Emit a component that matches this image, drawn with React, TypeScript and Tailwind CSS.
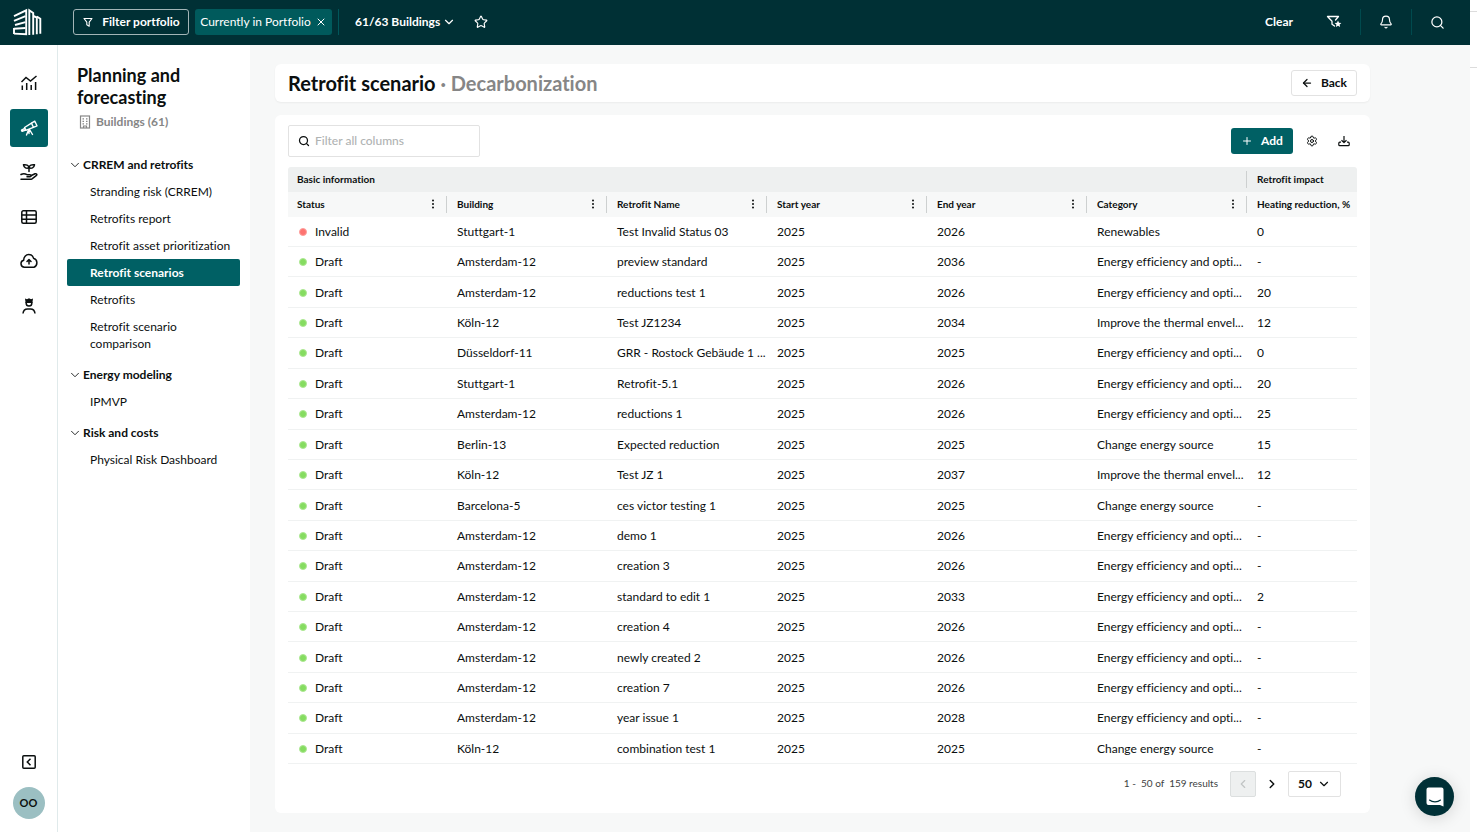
import { useState } from 'react';
import type { ReactNode } from 'react';
import {
  ArrowLeft,
  Bell,
  ChevronDown,
  ChevronLeft,
  ChevronRight,
  Plus,
  Search,
  Settings,
  Star,
  X,
} from 'lucide-react';

const NAV_GROUPS = [
  {
    title: 'CRREM and retrofits',
    items: [
      'Stranding risk (CRREM)',
      'Retrofits report',
      'Retrofit asset prioritization',
      'Retrofit scenarios',
      'Retrofits',
      'Retrofit scenario comparison',
    ],
  },
  { title: 'Energy modeling', items: ['IPMVP'] },
  { title: 'Risk and costs', items: ['Physical Risk Dashboard'] },
];

const COLUMNS = ['Status', 'Building', 'Retrofit Name', 'Start year', 'End year', 'Category'];

const EFFICIENCY = 'Energy efficiency and opti...';
const THERMAL = 'Improve the thermal envel...';
const SOURCE = 'Change energy source';

// status, building, retrofit name, start, end, category, heating reduction
const ROWS = [
  ['Invalid', 'Stuttgart-1', 'Test Invalid Status 03', '2025', '2026', 'Renewables', '0'],
  ['Draft', 'Amsterdam-12', 'preview standard', '2025', '2036', EFFICIENCY, '-'],
  ['Draft', 'Amsterdam-12', 'reductions test 1', '2025', '2026', EFFICIENCY, '20'],
  ['Draft', 'Köln-12', 'Test JZ1234', '2025', '2034', THERMAL, '12'],
  ['Draft', 'Düsseldorf-11', 'GRR - Rostock Gebäude 1 ...', '2025', '2025', EFFICIENCY, '0'],
  ['Draft', 'Stuttgart-1', 'Retrofit-5.1', '2025', '2026', EFFICIENCY, '20'],
  ['Draft', 'Amsterdam-12', 'reductions 1', '2025', '2026', EFFICIENCY, '25'],
  ['Draft', 'Berlin-13', 'Expected reduction', '2025', '2025', SOURCE, '15'],
  ['Draft', 'Köln-12', 'Test JZ 1', '2025', '2037', THERMAL, '12'],
  ['Draft', 'Barcelona-5', 'ces victor testing 1', '2025', '2025', SOURCE, '-'],
  ['Draft', 'Amsterdam-12', 'demo 1', '2025', '2026', EFFICIENCY, '-'],
  ['Draft', 'Amsterdam-12', 'creation 3', '2025', '2026', EFFICIENCY, '-'],
  ['Draft', 'Amsterdam-12', 'standard to edit 1', '2025', '2033', EFFICIENCY, '2'],
  ['Draft', 'Amsterdam-12', 'creation 4', '2025', '2026', EFFICIENCY, '-'],
  ['Draft', 'Amsterdam-12', 'newly created 2', '2025', '2026', EFFICIENCY, '-'],
  ['Draft', 'Amsterdam-12', 'creation 7', '2025', '2026', EFFICIENCY, '-'],
  ['Draft', 'Amsterdam-12', 'year issue 1', '2025', '2028', EFFICIENCY, '-'],
  ['Draft', 'Köln-12', 'combination test 1', '2025', '2025', SOURCE, '-'],
];

export default function App() {
  return (
    <div className="flex min-h-screen bg-white pb-[2px] font-['Lato','Noto_Sans',sans-serif] text-xs text-[#0b0f0f] [font-variant-ligatures:none]">
      <div className="flex min-w-0 flex-1 flex-col">
        <TopBar />
        <div className="flex flex-1">
          <Rail />
          <SideNav />
          <main className="flex min-w-0 flex-1 flex-col gap-[13px] bg-[#f7f8f8] pt-[19px] pr-[100px] pb-[19px] pl-[25px]">
            <header className="flex h-[38px] items-center justify-between rounded-md bg-white px-[13px] shadow-xs">
              <h1 className="pb-px text-xl leading-6 font-bold">
                Retrofit scenario <span className="text-[#868686]">· Decarbonization</span>
              </h1>
              <button
                type="button"
                className="flex h-[26px] w-[66px] items-center justify-center gap-2 rounded-[3px] border border-[#e2e2e2] font-bold"
              >
                <ArrowLeft className="size-3" strokeWidth={2.5} />
                Back
              </button>
            </header>
            <ScenarioTable />
          </main>
        </div>
      </div>
      <PageEdge />
      <button
        type="button"
        aria-label="Open chat"
        className="fixed right-[23px] bottom-[18px] flex size-[39px] items-center justify-center rounded-full bg-[#003036] shadow-[0_2px_16px_rgba(0,0,0,0.15)]"
      >
        <svg viewBox="0 0 18 20" className="h-5 w-[18px]">
          <path d="M2.5 0.5h13a2 2 0 0 1 2 2v17l-3.5-1.5H2.5a2 2 0 0 1-2-2V2.500a2 2 0 0 1 2-2z" fill="#fff" />
          <path d="M3.500 13c3 2.500 8 2.500 11 0" fill="none" stroke="#003036" strokeWidth="1.100" strokeLinecap="round" />
        </svg>
      </button>
    </div>
  );
}

function TopBar() {
  return (
    <div className="flex h-[45px] items-center bg-[#003035] pr-[25px] pb-px pl-[13px] text-white">
      <a href="#" aria-label="Home" className="mr-[31px]">
        <Logo />
      </a>
      <button
        type="button"
        className="flex h-[26px] w-[116px] items-center justify-center gap-2 rounded-[3px] border border-[#a3b5b7] font-bold"
      >
        <FunnelIcon />
        Filter portfolio
      </button>
      <button
        type="button"
        className="ml-[6px] flex h-[26px] w-[137px] items-center justify-center gap-1 rounded-[3px] bg-[#005a5c]"
      >
        Currently in Portfolio
        <X className="size-3" />
      </button>
      <div className="ml-[6px] h-[26px] w-px bg-[#00565a]" />
      <button type="button" className="ml-4 flex items-center gap-[2px] font-bold">
        61/63 Buildings
        <ChevronDown className="size-[14px]" />
      </button>
      <button type="button" aria-label="Save as favourite" className="ml-[18px]">
        <Star className="size-[14px]" />
      </button>

      <button type="button" className="ml-auto font-bold">
        Clear
      </button>
      <button type="button" aria-label="Saved filters" className="ml-[33px]">
        <svg viewBox="0 0 16 14" className="h-[14px] w-4">
          <path
            d="M8.500 11 6 9.200V6.200L1.500 1.500h11L9.500 5"
            fill="none"
            stroke="currentColor"
            strokeWidth="1.300"
            strokeLinejoin="round"
            strokeLinecap="round"
          />
          <path d="m12 5.500 1 2.200 2.400.3-1.800 1.600.5 2.400-2.100-1.200L9.900 12l.5-2.400L8.600 8l2.400-.3z" fill="currentColor" />
        </svg>
      </button>
      <div className="ml-[18px] h-[26px] w-px bg-[#004a4e]" />
      <button type="button" aria-label="Notifications" className="mx-[18px]">
        <Bell className="size-[14px]" />
      </button>
      <div className="h-[26px] w-px bg-[#004a4e]" />
      <button type="button" aria-label="Search" className="ml-[18px]">
        <Search className="size-[15px]" />
      </button>
    </div>
  );
}

function Rail() {
  return (
    <nav aria-label="Sections" className="flex w-[57px] flex-col items-center pt-[19px] pb-[13px]">
      <div className="flex h-[261px] flex-col justify-between">
        <RailLink label="Analytics">
          <TrendIcon />
        </RailLink>
        <RailLink label="Planning and forecasting" active>
          <TelescopeIcon />
        </RailLink>
        <RailLink label="Sustainability">
          <PlantHandIcon />
        </RailLink>
        <RailLink label="Data tables">
          <GridIcon />
        </RailLink>
        <RailLink label="Uploads">
          <CloudIcon />
        </RailLink>
        <RailLink label="Administration">
          <CrownUserIcon />
        </RailLink>
      </div>
      <button type="button" aria-label="Collapse menu" className="mt-auto mb-[18px]">
        <svg viewBox="0 0 14 14" className="size-[14px]" fill="none" stroke="currentColor" strokeWidth="1.500">
          <rect x="0.8" y="0.8" width="12.400" height="12.400" rx="1" />
          <path d="M8.500 3.800 5.300 7l3.200 3.200" />
        </svg>
      </button>
      <button type="button" className="size-8 rounded-full bg-[#9bbfc2] text-[11px] font-bold">
        OO
      </button>
    </nav>
  );
}

function RailLink({ label, active, children }: { label: string; active?: boolean; children: ReactNode }) {
  return (
    <a
      href="#"
      aria-label={label}
      className={`flex h-[38px] w-[38px] items-center justify-center rounded-[3px] ${
        active ? 'bg-[#006064] text-white' : ''
      }`}
    >
      {children}
    </a>
  );
}

function SideNav() {
  return (
    <aside className="w-[193px] shrink-0 border-l border-[#e0eaeb] pt-[19px] pr-[10px] pl-[9px]">
      <h2 className="px-[10px] text-lg leading-[22px] font-bold">Planning and forecasting</h2>
      <p className="mt-[5px] mb-5 flex items-center gap-1 px-[11px] leading-[18px] font-bold text-[#868686]">
        <BuildingIcon />
        Buildings (61)
      </p>
      {NAV_GROUPS.map((group) => (
        <section key={group.title} className="mb-1">
          <h3>
            <button type="button" className="flex h-[27px] items-center gap-px pl-px font-bold">
              <ChevronDown className="size-[14px]" strokeWidth={1.5} />
              {group.title}
            </button>
          </h3>
          <ul>
            {group.items.map((item) => (
              <li key={item}>
                <a
                  href="#"
                  className={`block rounded-[2px] py-[5px] pl-[23px] leading-[17px] ${
                    item === 'Retrofit scenarios' ? 'bg-[#006064] font-bold text-white' : ''
                  }`}
                >
                  {item}
                </a>
              </li>
            ))}
          </ul>
        </section>
      ))}
    </aside>
  );
}

function ScenarioTable() {
  const [filter, setFilter] = useState('');
  const [pageSize, setPageSize] = useState('50');

  const rows = ROWS.filter((row) => row.join(' ').toLowerCase().includes(filter.toLowerCase()));

  return (
    <section className="rounded-md bg-white px-[13px] pt-[10px] pb-4">
      <div className="flex items-center">
        <label className="flex h-8 w-48 items-center gap-[5px] rounded-[2px] border border-[#e2e2e2] pl-[9px]">
          <Search className="size-3" strokeWidth={2.5} />
          <input
            type="text"
            aria-label="Filter all columns"
            value={filter}
            onChange={(e) => setFilter(e.target.value)}
            placeholder="Filter all columns"
            className="w-40 font-medium outline-none placeholder:text-[#b0b3b3]"
          />
        </label>
        <button
          type="button"
          className="ml-auto flex h-[26px] w-[62px] items-center justify-center gap-2 rounded-[3px] bg-[#006064] font-bold text-white"
        >
          <Plus className="size-3" />
          Add
        </button>
        <button type="button" aria-label="Table settings" className="ml-[13px]">
          <Settings className="size-3" />
        </button>
        <button type="button" aria-label="Download" className="mr-[7px] ml-5">
          <svg
            viewBox="0 0 12 12"
            className="size-3"
            fill="none"
            stroke="currentColor"
            strokeWidth="1.200"
            strokeLinejoin="round"
          >
            <path d="M6 1v6.500M3.500 5.200 6 7.600l2.500-2.400" />
            <path d="M3 7.200H1.800a1 1 0 0 0-1 1v1.500a1 1 0 0 0 1 1h8.400a1 1 0 0 0 1-1V8.200a1 1 0 0 0-1-1H9" />
          </svg>
        </button>
      </div>

      <table className="mt-[10px] h-[597px] w-full table-fixed border-collapse text-left">
        <colgroup>
          {COLUMNS.map((column) => (
            <col key={column} className="w-40" />
          ))}
          <col />
        </colgroup>
        <thead className="text-[10px]">
          <tr className="h-[25px] bg-[#eef0f0]">
            <th colSpan={6} className="rounded-tl-[3px] p-0 pl-[9px]">
              <div className="flex items-center justify-between pr-px">
                Basic information
                <span className="h-[17px] w-px bg-[#cdd0d0]" />
              </div>
            </th>
            <th className="rounded-tr-[3px] p-0 pl-[9px]">Retrofit impact</th>
          </tr>
          <tr className="h-[25px] bg-[#f7f8f8]">
            {COLUMNS.map((column) => (
              <th key={column} className="p-0 pl-[9px]">
                <div className="flex items-center pr-px">
                  {column}
                  <button type="button" aria-label={`${column} menu`} className="mr-[11px] ml-auto">
                    <svg viewBox="0 0 4 12" className="h-3 w-1" fill="currentColor">
                      <circle cx="2" cy="1.500" r="1" />
                      <circle cx="2" cy="5" r="1" />
                      <circle cx="2" cy="8.500" r="1" />
                    </svg>
                  </button>
                  <span className="h-[17px] w-px bg-[#cdd0d0]" />
                </div>
              </th>
            ))}
            <th className="p-0 pl-[9px] whitespace-nowrap">Heating reduction, %</th>
          </tr>
        </thead>
        <tbody>
          {rows.map(([status, ...cells]) => (
            <tr key={cells.join()} className="border-b border-[#f0f2f2]">
              <td className="p-0 pt-px pl-[11px]">
                <div className="flex items-center gap-2">
                  <StatusDot invalid={status === 'Invalid'} />
                  {status}
                </div>
              </td>
              {cells.map((cell, i) => (
                <td key={i} className="p-0 pt-px pl-[9px] whitespace-nowrap">
                  {cell}
                </td>
              ))}
            </tr>
          ))}
        </tbody>
      </table>

      <div className="mt-[7px] flex h-[26px] items-center justify-end pr-4">
        <p className="mr-3 text-[10px] whitespace-pre text-[#3d4242]">{'1 -  50 of  159 results'}</p>
        <button
          type="button"
          aria-label="Previous page"
          disabled
          className="flex size-[26px] items-center justify-center rounded-[2px] border border-[#dcdfdf] bg-[#eef0f0] text-[#c0c4c4]"
        >
          <ChevronLeft className="size-[14px]" />
        </button>
        <button type="button" aria-label="Next page" className="mx-[9px]">
          <ChevronRight className="size-[14px]" strokeWidth={2.5} />
        </button>
        <div className="relative">
          <select
            aria-label="Rows per page"
            value={pageSize}
            onChange={(e) => setPageSize(e.target.value)}
            className="h-[26px] w-[53px] appearance-none rounded-[2px] border border-[#e2e2e2] bg-white pl-[9px] font-bold"
          >
            <option>50</option>
            <option>100</option>
          </select>
          <ChevronDown className="pointer-events-none absolute top-[6px] right-[10px] size-[14px]" />
        </div>
      </div>
    </section>
  );
}

function StatusDot({ invalid }: { invalid: boolean }) {
  return (
    <span
      className={`size-2 rounded-full border ${
        invalid ? 'border-[#ffa09d] bg-[#fd7370]' : 'border-[#aee894] bg-[#85dc60]'
      }`}
    />
  );
}

// sliver of the neighbouring panel on the right side
function PageEdge() {
  return (
    <div className="w-[7px] shrink-0 pt-[11px]">
      <div className="h-[57px] border-y border-[#dcdcdc]" />
    </div>
  );
}

function Logo() {
  return (
    <svg viewBox="0 0 29 28" className="h-7 w-[29px]" fill="none" stroke="currentColor" strokeWidth="1.900">
      <path d="M1 8.200 13.200 2.300V26.200L1 25.600" />
      <path d="M1 12.800 12.500 8.200" />
      <path d="M2 17 12.500 14.200" />
      <path d="M1 20.800 12.500 20" />
      <path d="M1 20v6" />
      <path d="M16.300 27V2.300L20.200 5V26.700" />
      <path d="M20.200 8 23.800 9.500V26.300" />
      <path d="M23.800 8.500 27.300 10.800V25.800" />
    </svg>
  );
}

function FunnelIcon() {
  return (
    <svg viewBox="0 0 12 12" className="size-3" fill="none" stroke="currentColor" strokeWidth="1.100" strokeLinejoin="round">
      <path d="M2 2.500h8L7.200 6.200v4L4.800 8.800V6.200z" />
    </svg>
  );
}

function TrendIcon() {
  return (
    <svg viewBox="0 0 18 18" className="size-[18px]" fill="none" stroke="currentColor" strokeWidth="1.500">
      <path d="m1.500 8 4.500-4.500L10.500 7 16.500 2" />
      <path d="M2.300 11.500V16M6.700 9v7M11.200 11v5M15.600 8v8" />
    </svg>
  );
}

function TelescopeIcon() {
  return (
    <svg
      viewBox="0 0 18 18"
      className="size-[18px]"
      fill="none"
      stroke="currentColor"
      strokeWidth="1.400"
      strokeLinecap="round"
      strokeLinejoin="round"
    >
      <path d="m11.500 4.200 3.300-2 2.200 4.600-3.600 1.500z" />
      <path d="M11.500 4.200 4.500 8.500l1.300 2.800 7.600-3" />
      <path d="m4.800 9.300-3.300 1.900.6 1.200 3.500-1.400" />
      <path d="M8.500 11 6.500 16M9.500 10.500l3 5M9 11v3.500" />
    </svg>
  );
}

function PlantHandIcon() {
  return (
    <svg
      viewBox="0 0 18 18"
      className="size-[18px]"
      fill="none"
      stroke="currentColor"
      strokeWidth="1.500"
      strokeLinecap="round"
      strokeLinejoin="round"
    >
      <path d="M9 8.500V5M9 4.700C8.800 2.500 6 1.200 3.500 1.800 4 4.700 6.500 6 9 4.700zM9 4.700c.2-2.200 3-3.500 5.500-2.900C14 4.700 11.500 6 9 4.700z" />
      <path d="M1 11.500c2.500-1.500 4.500-.8 6 .2h3c1.500 0 1.500 2 0 2H7M10.800 12.700l4.200-1.900c1.500-.6 2.500 1 1.200 1.900l-4.200 3.100c-.6.400-1 .5-1.700.5H1" />
    </svg>
  );
}

function GridIcon() {
  return (
    <svg viewBox="0 0 18 18" className="size-[18px]" fill="none" stroke="currentColor" strokeWidth="1.500">
      <rect x="1.800" y="2.800" width="14.400" height="12.400" rx="1.500" />
      <path d="M1.800 7h14.400M1.800 11.200h14.400M6.500 2.800v12.400" />
    </svg>
  );
}

function CloudIcon() {
  return (
    <svg
      viewBox="0 0 18 18"
      className="size-[18px]"
      fill="none"
      stroke="currentColor"
      strokeWidth="1.500"
      strokeLinecap="round"
      strokeLinejoin="round"
    >
      <path d="M4.500 15.200a3.500 3.500 0 0 1-.8-6.900C3.500 5 6 2.500 8.700 2.500c2.500 0 4.300 1.500 5 4 3.800.5 4.500 7 .3 8.700z" />
      <path d="M9 12V8M7 9.500l2-2 2 2" />
    </svg>
  );
}

function CrownUserIcon() {
  return (
    <svg viewBox="0 0 18 18" className="size-[18px]" fill="none" stroke="currentColor" strokeWidth="1.500">
      <path d="M5 1.500 7 2.300 9 1.200l2 1.100 2-.8-.6 4.500H5.600z" fill="currentColor" stroke="none" />
      <path d="M6.200 5v1.300a2.800 2.800 0 0 0 5.600 0V5" />
      <path d="M3 16.500c.3-3 2-4.500 4.500-4.500h3c2.500 0 4.200 1.500 4.500 4.500" />
    </svg>
  );
}

function BuildingIcon() {
  return (
    <svg viewBox="0 0 14 14" className="size-[14px]" fill="none" stroke="currentColor" strokeWidth="1.200">
      <rect x="2.500" y="1" width="9" height="12" />
      <path d="M4.500 3.800h1.500M8 3.800h1.500M4.500 6.300h1.500M8 6.300h1.500M4.500 8.800h1.500M8 8.800h1.500M5.500 13v-2h3v2" />
    </svg>
  );
}
